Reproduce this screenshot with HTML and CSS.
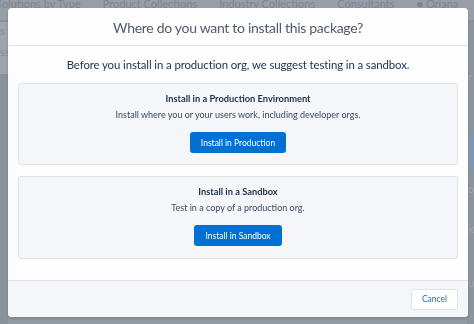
FILE: index.html
```html
<!DOCTYPE html>
<html lang="en">
<head>
    <meta charset="UTF-8">
    <meta name="viewport" content="width=device-width, initial-scale=1.0">
    <title>Install Package</title>
    <link rel="stylesheet" href="styles.css">
</head>
<body>

    <!-- pagina de fundo -->
    <div class="page">
        <nav class="top-nav">
            <span>Solutions by Type</span>
            <span>Product Collections</span>
            <span>Industry Collections</span>
            <span>Consultants</span>
            <span>&#9679; Oriana</span>
        </nav>
        <div class="page-main">
            <div class="side-left">
                <div class="side-top">
                    <span>s</span>
                    <span>ss</span>
                </div>
            </div>
            <div class="page-center"></div>
            <div class="side-right">
                <span class="r1">r</span>
                <span class="blue-chip"></span>
                <span class="r2">o</span>
                <span class="r4">ic</span>
                <span class="r5">u</span>
            </div>
        </div>
    </div>

    <div class="backdrop"></div>

    <div class="modal">
        <header class="modal-header">
            <h2>Where do you want to install this package?</h2>
        </header>

        <div class="modal-body">
            <p class="lead">Before you install in a production org, we suggest testing in a sandbox.</p>

            <div class="option-box">
                <h3>Install in a Production Environment</h3>
                <p>Install where you or your users work, including developer orgs.</p>
                <button class="btn-brand">Install in Production</button>
            </div>

            <div class="option-box">
                <h3>Install in a Sandbox</h3>
                <p>Test in a copy of a production org.</p>
                <button class="btn-brand btn-small">Install in Sandbox</button>
            </div>
        </div>

        <footer class="modal-footer">
            <button class="btn-neutral">Cancel</button>
        </footer>
    </div>

</body>
</html>
```

FILE: styles.css
```css
/* estilos gerais */
body {
    margin: 0;
    font-family: 'Lato', 'Liberation Sans', sans-serif;
    background: #8d959f;
    color: #16325c;
    overflow: hidden;
    height: 324px;
}

/* --- PAGINA DE FUNDO --- */
.page {
    height: 324px; display: flex; flex-direction: column;
}
.top-nav {
    display: flex; gap: 22px; height: 20px;
    background: #9ea5ad; color: #7b848d; font-size: 11px;
    line-height: 8px; white-space: nowrap; margin-left: -4px;
    border-bottom: 2px solid #8c959e;
}
.page-main {
    flex: 1; display: flex;
}
.side-left {
    width: 8px; background: #8b949d;
}
.side-top {
    height: 50px; background: #a7acb3; color: #8a9199;
    font-size: 11px; display: flex; flex-direction: column;
    gap: 8px; padding-top: 2px; overflow: hidden;
}
.page-center {
    flex: 1; background: #9aa2aa;
}
.side-right {
    width: 7px; background: #8f98a1; color: #a8afb6;
    font-size: 11px; position: relative; overflow: hidden;
}
.side-right span { position: absolute; left: 1px; }
.side-right .r1 { top: 48px; }
.side-right .blue-chip {
    top: 112px; width: 8px; height: 36px; background: #7f9bbb; left: 2px;
    border-radius: 2px;
}
.side-right .r2 { top: 160px; }
.side-right .r4 { top: 200px; }
.side-right .r5 { top: 254px; }

.backdrop {
    position: fixed; top: 0; left: 0; width: 100%; height: 100%;
    background: rgba(126, 140, 153, 0.25);
}

/* --- MODAL --- */
.modal {
    position: absolute; top: 8px; left: 8px; width: 460px;
    background: #fdfdfe; border-radius: 4px; overflow: hidden;
    box-shadow: 0 2px 3px rgba(0, 0, 0, 0.15);
}
.modal-header {
    height: 37px; border-bottom: 1px solid #dfe2e6;
    display: flex; justify-content: center; align-items: center;
}
.modal-header h2 {
    margin: 0; font-size: 14px; font-weight: 400; color: #505b68;
    padding-top: 2px; letter-spacing: -0.3px;
}
.modal-body {
    padding: 11px 10px 21px 10px;
}
.lead {
    margin: 0 0 10px 0; text-align: center; font-size: 11.4px; color: #213557;
    line-height: 16px; letter-spacing: -0.1px;
}
.option-box {
    background: #f4f6f9; border: 1px solid #dfe2e6; border-radius: 3px;
    height: 82px; box-sizing: border-box; margin-bottom: 11px;
    display: flex; flex-direction: column; align-items: center;
    padding-top: 8px;
}
.option-box:last-child { margin-bottom: 0; height: 83px; }
.option-box h3 {
    margin: 0; font-size: 9.3px; font-weight: 700; color: #1f2f48; line-height: 14px;
}
.option-box p {
    margin: 2px 0 0 0; font-size: 9px; color: #3b4a60; line-height: 14px;
}
.btn-brand {
    margin-top: 10px; width: 96px; height: 21px; border: none; border-radius: 3px;
    background: #0070d2; color: #fff; font-family: inherit; font-size: 8.5px;
    padding: 0; cursor: pointer;
}
.btn-small { width: 88px; }
.modal-footer {
    background: #f4f6f9; border-top: 1px solid #dfe2e6;
    height: 36px; display: flex; justify-content: flex-end; align-items: center;
    padding-right: 10px;
}
.btn-neutral {
    width: 47px; height: 21px; background: #fff; border: 1px solid #e0e3e7;
    border-radius: 3px; color: #2e6ab3; font-family: inherit; font-size: 8.5px;
    padding: 0; cursor: pointer;
}
```
